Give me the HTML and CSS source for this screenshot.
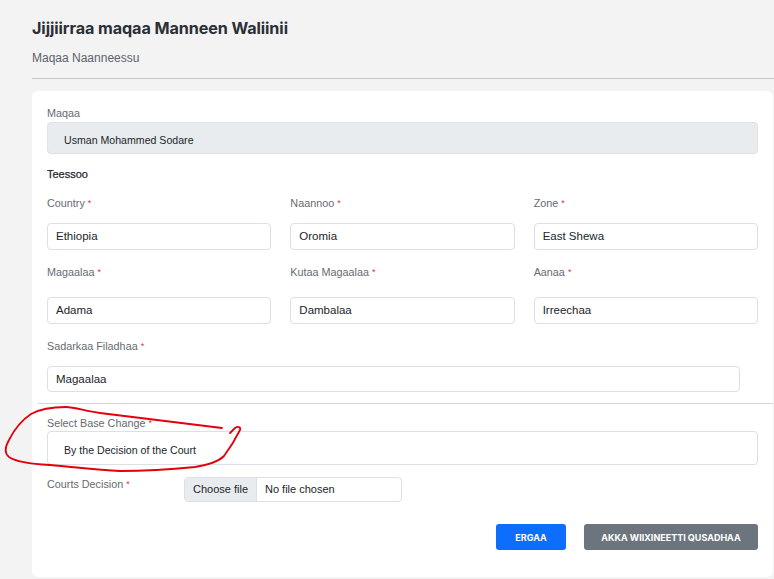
FILE: index.html
```html
<!DOCTYPE html>
<html>
<head>
<meta charset="utf-8">
<link rel="stylesheet" href="styles.css">
</head>
<body>
<div class="page">
  <header class="head">
    <h1 class="title">Jijjiirraa maqaa Manneen Waliinii</h1>
    <p class="subtitle">Maqaa Naanneessu</p>
  </header>
  <hr class="head-rule">
  <section class="card">
    <div class="lbl lbl-name">Maqaa</div>
    <div class="control control-lg control-ro">Usman Mohammed Sodare</div>

    <div class="section-title">Teessoo</div>

    <div class="grid row1">
      <div class="field">
        <div class="lbl">Country <span class="req">*</span></div>
        <div class="control">Ethiopia</div>
      </div>
      <div class="field">
        <div class="lbl">Naannoo <span class="req">*</span></div>
        <div class="control">Oromia</div>
      </div>
      <div class="field">
        <div class="lbl">Zone <span class="req">*</span></div>
        <div class="control">East Shewa</div>
      </div>
    </div>

    <div class="grid row2">
      <div class="field">
        <div class="lbl">Magaalaa <span class="req">*</span></div>
        <div class="control">Adama</div>
      </div>
      <div class="field">
        <div class="lbl">Kutaa Magaalaa <span class="req">*</span></div>
        <div class="control">Dambalaa</div>
      </div>
      <div class="field">
        <div class="lbl">Aanaa <span class="req">*</span></div>
        <div class="control">Irreechaa</div>
      </div>
    </div>

    <div class="field row3">
      <div class="lbl">Sadarkaa Filadhaa <span class="req">*</span></div>
      <div class="control control-narrow">Magaalaa</div>
    </div>

    <hr class="card-rule">

    <div class="field row4">
      <div class="lbl">Select Base Change <span class="req">*</span></div>
      <div class="control control-lg control-tall">By the Decision of the Court</div>
    </div>

    <div class="file-row">
      <div class="lbl file-lbl">Courts Decision <span class="req">*</span></div>
      <div class="file">
        <span class="file-btn">Choose file</span>
        <span class="file-name">No file chosen</span>
      </div>
    </div>

    <div class="actions">
      <button class="btn btn-primary">ERGAA</button>
      <button class="btn btn-secondary">AKKA WIIXINEETTI QUSADHAA</button>
    </div>
  </section>

  <svg class="annot" width="260" height="80" viewBox="0 400 260 80">
    <path d="M222 428 C190 424 150 419 100 413 C85 411 75 407 66 407 C52 407 40 409 31 414 C22 420 14 430 9 440 C5 447 4 453 9 457 C16 462 30 464 50 465 C75 467 95 470 120 471 C150 471 175 469 195 467 C208 465 218 462 224 456 C230 448 236 438 240 430 C241 427 238 426 235 428 C233 430 231 432 230 433"
      fill="none" stroke="#e3000b" stroke-width="1.8" stroke-linecap="round" stroke-linejoin="round"/>
  </svg>
</div>
</body>
</html>
```

FILE: styles.css
```css
* { box-sizing: border-box; }
html, body { margin: 0; padding: 0; }
body {
  background: #f3f3f3;
  font-family: "Liberation Sans", Arial, sans-serif;
  color: #212529;
  width: 774px;
  height: 579px;
  overflow: hidden;
}
.page {
  position: relative;
  padding: 16px 0 0 32px;
}
.head { margin: 0; }
.title {
  margin: 0;
  font-family: Inter, "Liberation Sans", sans-serif;
  font-weight: 700;
  font-size: 16.2px;
  line-height: 24px;
  color: #2b2f36;
  letter-spacing: -0.1px;
}
.subtitle {
  margin: 10px 0 0;
  font-size: 12px;
  line-height: 16px;
  color: #5c636a;
}
.head-rule {
  margin: 12px 0 0;
  border: 0;
  border-top: 1px solid #c8c8c8;
  height: 0;
}
.card {
  margin-top: 12px;
  width: 741px;
  height: 486px;
  background: #fff;
  border-radius: 6px;
  padding: 14px 15px 0 15px;
}
.lbl {
  font-size: 10.8px;
  line-height: 16px;
  color: #666b70;
}
.req { color: #dc3545; font-size: 9px; vertical-align: 1px; }
.control {
  height: 27px;
  border: 1px solid #dcdfe3;
  border-radius: 4px;
  background: #fff;
  font-size: 11.5px;
  line-height: 25px;
  padding: 0 8px;
  color: #212529;
}
.control-lg { padding-left: 16px; font-size: 10.6px; }
.control-ro {
  margin-top: 1px;
  height: 32px;
  line-height: 30px;
  padding-top: 2px;
  background: #e9ecef;
  border-color: #dee2e6;
}
.section-title {
  margin-top: 12px;
  font-size: 11px;
  line-height: 16px;
  color: #26292d;
  font-weight: 400;
  -webkit-text-stroke: 0.25px #26292d;
}
.grid {
  display: grid;
  grid-template-columns: repeat(3, 1fr);
  column-gap: 19px;
}
.row1 { margin-top: 13px; }
.row1 .control { margin-top: 12px; }
.row2 { margin-top: 14px; }
.row2 .control { margin-top: 17px; }
.row3 { margin-top: 14px; }
.row3 .control { margin-top: 12px; height: 26px; line-height: 24px; }
.control-narrow { width: 693px; }
.card-rule {
  margin: 11px -15px 0 -9px;
  border: 0;
  border-top: 1px solid #d6d6d6;
  height: 0;
}
.row4 { margin-top: 11px; }
.control-tall {
  height: 34px;
  line-height: 32px;
  padding-top: 2px;
}
.file-row {
  display: flex;
  align-items: flex-start;
  margin-top: 12px;
}
.file-lbl { width: 137px; margin-top: -1px; }
.file {
  display: flex;
  width: 218px;
  height: 25px;
  border: 1px solid #dcdfe3;
  border-radius: 4px;
  overflow: hidden;
  font-size: 11px;
  line-height: 23px;
}
.file-btn {
  width: 72px;
  background: #e9ecef;
  border-right: 1px solid #dcdfe3;
  text-align: center;
  color: #212529;
}
.file-name { padding-left: 8px; color: #212529; }
.actions {
  display: flex;
  justify-content: flex-end;
  gap: 18px;
  margin-top: 22px;
}
.btn {
  height: 26px;
  border: 0;
  border-radius: 3px;
  color: #fff;
  font-family: Inter, "Liberation Sans", sans-serif;
  font-weight: 700;
  font-size: 9px;
  padding: 0;
}
.btn-primary { background: #0d6efd; width: 70px; }
.btn-secondary { background: #6c757d; width: 174px; }
.annot {
  position: absolute;
  left: 0;
  top: 400px;
  pointer-events: none;
}
```
